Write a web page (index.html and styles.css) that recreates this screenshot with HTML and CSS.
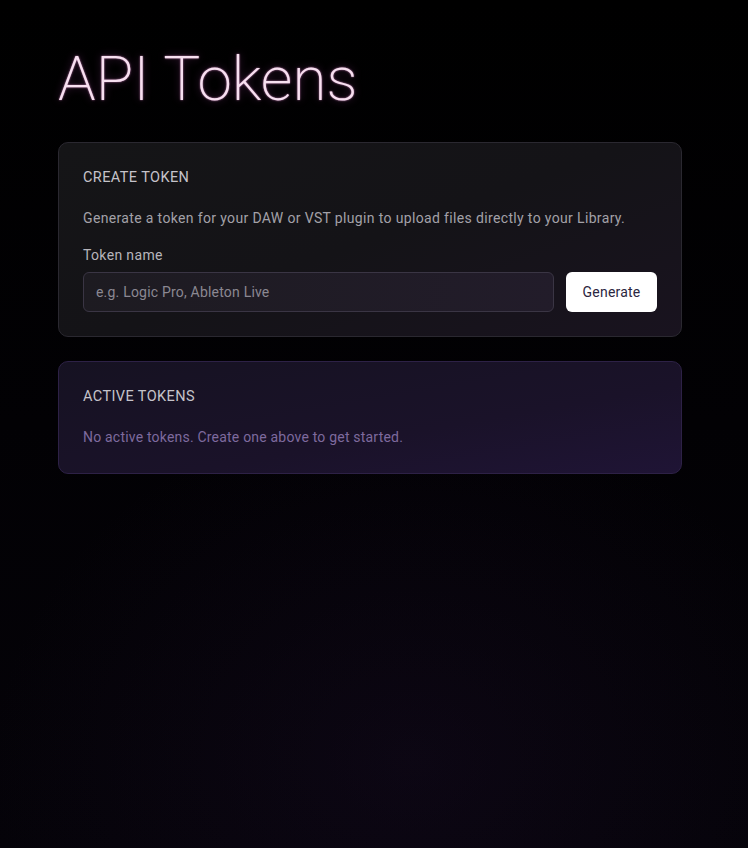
FILE: index.html
```html
<!DOCTYPE html>
<html lang="en">
<head>
<meta charset="utf-8">
<title>API Tokens</title>
<link rel="stylesheet" href="styles.css">
</head>
<body>
<main class="page">
  <h1 class="title">API Tokens</h1>
  <section class="card card-create">
    <h2 class="card-heading">CREATE TOKEN</h2>
    <p class="card-desc">Generate a token for your DAW or VST plugin to upload files directly to your Library.</p>
    <label class="field-label" for="token-name">Token name</label>
    <div class="field-row">
      <input id="token-name" class="field-input" type="text" placeholder="e.g. Logic Pro, Ableton Live">
      <button class="btn-generate" type="button">Generate</button>
    </div>
  </section>
  <section class="card card-active">
    <h2 class="card-heading">ACTIVE TOKENS</h2>
    <p class="empty-text">No active tokens. Create one above to get started.</p>
  </section>
</main>
</body>
</html>
```
FILE: styles.css
```css
html, body {
  margin: 0;
  height: 100%;
}
body {
  background:
    radial-gradient(ellipse 80% 60% at 55% 90%, rgba(40, 20, 60, 0.22), transparent 70%),
    linear-gradient(180deg, #000000 0%, #020104 50%, #050309 100%);
  font-family: Roboto, "Noto Sans", sans-serif;
  color: #c8c6cc;
}
.page {
  width: 624px;
  padding: 36px 0 0 58px;
  display: flex;
  flex-direction: column;
  gap: 24px;
}
.title {
  margin: 3px 0 -1px 0;
  font-family: Roboto, "Noto Sans", sans-serif;
  font-weight: 200;
  font-size: 62px;
  line-height: 80px;
  letter-spacing: 0px;
  color: #f7e0f0;
  text-shadow: 0 0 2px rgba(230, 150, 210, 0.85), 0 0 9px rgba(170, 70, 170, 0.4);
}
.card {
  border-radius: 10px;
  display: flex;
  flex-direction: column;
}
.card-create {
  padding: 23px 24px 24px;
  background: linear-gradient(160deg, #151517 0%, #141317 50%, #19131f 100%);
  border: 1px solid #2a2830;
}
.card-active {
  padding: 23px 24px 26px;
  background: linear-gradient(170deg, #161222 0%, #1a1229 60%, #1f1435 100%);
  border: 1px solid #2d2146;
}
.card-heading {
  margin: 0;
  font-size: 14.5px;
  font-weight: 400;
  letter-spacing: 0.4px;
  line-height: 24px;
  color: #c5c3ca;
}
.card-desc {
  margin: 18px 0 0;
  font-size: 14px;
  line-height: 20px;
  letter-spacing: 0.35px;
  color: #a3a1a8;
}
.field-label {
  margin-top: 17px;
  font-size: 14px;
  line-height: 20px;
  letter-spacing: 0.35px;
  color: #b7b5bb;
}
.field-row {
  margin-top: 7px;
  display: flex;
  gap: 12px;
  align-items: stretch;
}
.field-input {
  flex: 1;
  height: 40px;
  box-sizing: border-box;
  padding: 0 12px;
  background: linear-gradient(100deg, #1d1b21 0%, #221c2a 100%);
  border: 1px solid #3a3544;
  border-radius: 6px;
  font-family: inherit;
  font-size: 14px;
  letter-spacing: 0.2px;
  color: #e0dee4;
  outline: none;
}
.field-input::placeholder {
  color: #8b8892;
}
.btn-generate {
  width: 91px;
  height: 40px;
  background: #ffffff;
  border: none;
  border-radius: 6px;
  font-family: inherit;
  font-size: 14px;
  letter-spacing: 0.2px;
  color: #2b2640;
  cursor: pointer;
}
.empty-text {
  margin: 18px 0 0;
  font-size: 14px;
  line-height: 20px;
  letter-spacing: 0.2px;
  color: #7e6a9e;
}
```
